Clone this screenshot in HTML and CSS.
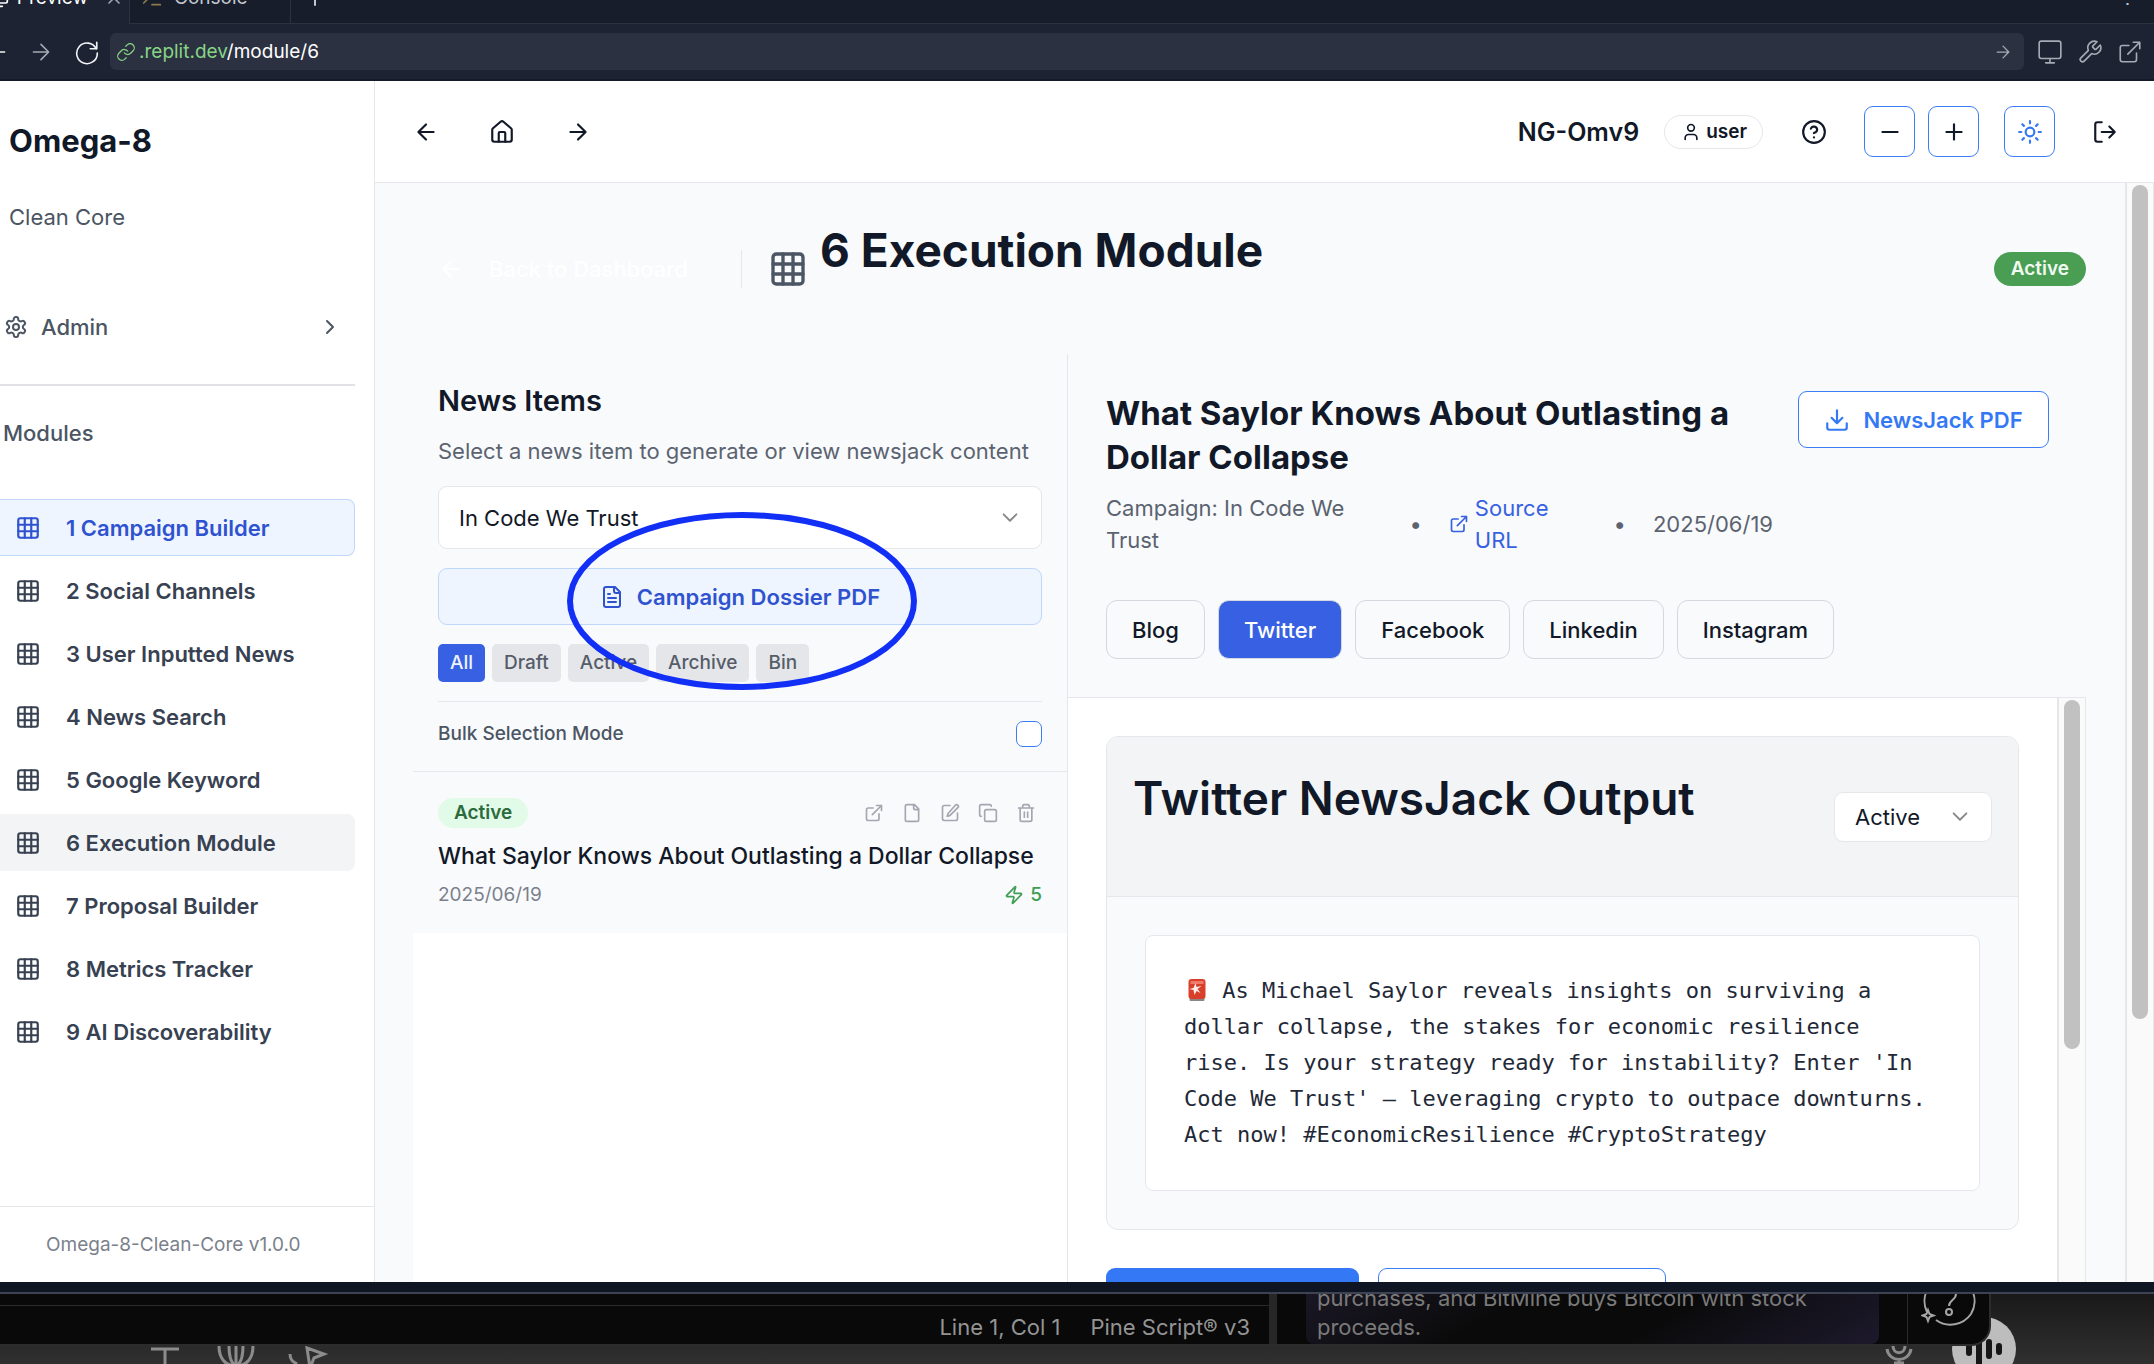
FILE: index.html
```html
<!DOCTYPE html>
<html lang="en">
<head>
<meta charset="utf-8">
<title>Omega-8 – 6 Execution Module</title>
<link rel="stylesheet" href="styles.css">
</head>
<body>
<svg class="sprite" aria-hidden="true">
  <symbol id="grid" viewBox="0 0 24 24"><rect x="3" y="3" width="18" height="18" rx="2"/><path d="M3 9h18M3 15h18M9 3v18M15 3v18"/></symbol>
  <symbol id="left" viewBox="0 0 24 24"><path d="m12 19-7-7 7-7M19 12H5"/></symbol>
  <symbol id="right" viewBox="0 0 24 24"><path d="m12 5 7 7-7 7M5 12h14"/></symbol>
  <symbol id="home" viewBox="0 0 24 24"><path d="M15 21v-8a1 1 0 0 0-1-1h-4a1 1 0 0 0-1 1v8"/><path d="M3 10a2 2 0 0 1 .7-1.5l7-6a2 2 0 0 1 2.6 0l7 6A2 2 0 0 1 21 10v9a2 2 0 0 1-2 2H5a2 2 0 0 1-2-2z"/></symbol>
  <symbol id="reload" viewBox="0 0 24 24"><path d="M21 3v6h-6"/><path d="M20.500 9A9.500 9.500 0 1 0 21.500 13"/></symbol>
  <symbol id="link" viewBox="0 0 24 24"><path d="M10 13a5 5 0 0 0 7.540.540l3-3a5 5 0 0 0-7.070-7.070l-1.720 1.710"/><path d="M14 11a5 5 0 0 0-7.540-.540l-3 3a5 5 0 0 0 7.070 7.070l1.710-1.710"/></symbol>
  <symbol id="monitor" viewBox="0 0 24 24"><rect x="2" y="2" width="20" height="16" rx="2"/><path d="M8 22h8M12 18v4"/></symbol>
  <symbol id="wrench" viewBox="0 0 24 24"><path d="M14.700 6.300a1 1 0 0 0 0 1.400l1.600 1.600a1 1 0 0 0 1.400 0l3.770-3.770a6 6 0 0 1-7.940 7.940l-6.910 6.910a2.120 2.120 0 0 1-3-3l6.910-6.910a6 6 0 0 1 7.940-7.940z"/></symbol>
  <symbol id="external" viewBox="0 0 24 24"><path d="M15 3h6v6M10 14 21 3M18 13v6a2 2 0 0 1-2 2H5a2 2 0 0 1-2-2V8a2 2 0 0 1 2-2h6"/></symbol>
  <symbol id="cog" viewBox="0 0 24 24"><path d="M12.220 2h-.440a2 2 0 0 0-2 2v.180a2 2 0 0 1-1 1.730l-.430.250a2 2 0 0 1-2 0l-.150-.080a2 2 0 0 0-2.730.730l-.220.380a2 2 0 0 0 .730 2.730l.150.100a2 2 0 0 1 1 1.720v.510a2 2 0 0 1-1 1.740l-.150.090a2 2 0 0 0-.730 2.730l.220.380a2 2 0 0 0 2.730.730l.150-.080a2 2 0 0 1 2 0l.430.250a2 2 0 0 1 1 1.730V20a2 2 0 0 0 2 2h.440a2 2 0 0 0 2-2v-.180a2 2 0 0 1 1-1.730l.430-.250a2 2 0 0 1 2 0l.150.080a2 2 0 0 0 2.730-.730l.220-.390a2 2 0 0 0-.730-2.730l-.150-.080a2 2 0 0 1-1-1.740v-.500a2 2 0 0 1 1-1.740l.150-.090a2 2 0 0 0 .730-2.730l-.220-.380a2 2 0 0 0-2.730-.730l-.150.080a2 2 0 0 1-2 0l-.430-.250a2 2 0 0 1-1-1.730V4a2 2 0 0 0-2-2z"/><circle cx="12" cy="12" r="3"/></symbol>
  <symbol id="chev-right" viewBox="0 0 24 24"><path d="m9 18 6-6-6-6"/></symbol>
  <symbol id="chev-down" viewBox="0 0 24 24"><path d="m5 8 7 7 7-7"/></symbol>
  <symbol id="user" viewBox="0 0 24 24"><path d="M19 21v-2a4 4 0 0 0-4-4H9a4 4 0 0 0-4 4v2"/><circle cx="12" cy="7" r="4"/></symbol>
  <symbol id="help" viewBox="0 0 24 24"><circle cx="12" cy="12" r="10"/><path d="M9.090 9a3 3 0 0 1 5.830 1c0 2-3 3-3 3M12 17h.010"/></symbol>
  <symbol id="minus" viewBox="0 0 24 24"><path d="M5 12h14"/></symbol>
  <symbol id="plus" viewBox="0 0 24 24"><path d="M5 12h14M12 5v14"/></symbol>
  <symbol id="sun" viewBox="0 0 24 24"><circle cx="12" cy="12" r="4"/><path d="M12 2v2M12 20v2M4.930 4.930l1.410 1.410M17.660 17.660l1.410 1.410M2 12h2M20 12h2M6.340 17.660l-1.410 1.410M19.070 4.930l-1.410 1.410"/></symbol>
  <symbol id="logout" viewBox="0 0 24 24"><path d="M9 21H5a2 2 0 0 1-2-2V5a2 2 0 0 1 2-2h4M16 17l5-5-5-5M21 12H9"/></symbol>
  <symbol id="filetext" viewBox="0 0 24 24"><path d="M15 2H6a2 2 0 0 0-2 2v16a2 2 0 0 0 2 2h12a2 2 0 0 0 2-2V7zM14 2v4a2 2 0 0 0 2 2h4M10 9H8M16 13H8M16 17H8"/></symbol>
  <symbol id="file" viewBox="0 0 24 24"><path d="M15 2H6a2 2 0 0 0-2 2v16a2 2 0 0 0 2 2h12a2 2 0 0 0 2-2V7zM14 2v4a2 2 0 0 0 2 2h4"/></symbol>
  <symbol id="edit" viewBox="0 0 24 24"><path d="M12 3H5a2 2 0 0 0-2 2v14a2 2 0 0 0 2 2h14a2 2 0 0 0 2-2v-7"/><path d="M18.380 2.620a1 1 0 0 1 3 3l-9 9a2 2 0 0 1-.860.510l-2.870.840.840-2.870a2 2 0 0 1 .510-.860z"/></symbol>
  <symbol id="copy" viewBox="0 0 24 24"><rect x="8" y="8" width="14" height="14" rx="2"/><path d="M4 16a2 2 0 0 1-2-2V4a2 2 0 0 1 2-2h10a2 2 0 0 1 2 2"/></symbol>
  <symbol id="trash" viewBox="0 0 24 24"><path d="M3 6h18M19 6v14a2 2 0 0 1-2 2H7a2 2 0 0 1-2-2V6M8 6V4a2 2 0 0 1 2-2h4a2 2 0 0 1 2 2v2M10 11v6M14 11v6"/></symbol>
  <symbol id="zap" viewBox="0 0 24 24"><path d="M4 14a1 1 0 0 1-.780-1.630l9.900-10.200a.5.5 0 0 1 .860.460l-1.920 6.020A1 1 0 0 0 13 10h7a1 1 0 0 1 .780 1.630l-9.900 10.200a.5.5 0 0 1-.860-.460l1.920-6.020A1 1 0 0 0 11 14z"/></symbol>
  <symbol id="download" viewBox="0 0 24 24"><path d="M21 15v4a2 2 0 0 1-2 2H5a2 2 0 0 1-2-2v-4M7 10l5 5 5-5M12 15V3"/></symbol>
  <symbol id="close" viewBox="0 0 24 24"><path d="M18 6 6 18M6 6l12 12"/></symbol>
</svg>

<div class="browser">
  <div class="tabs">
    <button class="tab tab-on"><svg class="icon s20"><use href="#monitor"/></svg>Preview<svg class="icon s20 tab-x"><use href="#close"/></svg></button>
    <button class="tab"><svg class="icon s20 prompt" viewBox="0 0 24 24"><path d="m2 18 6-6-6-6M12 20h10"/></svg>Console</button>
    <button class="tab tab-new" aria-label="New tab"><svg class="icon s24"><use href="#plus"/></svg></button>
    <span class="more">⋮</span>
  </div>
  <div class="toolbar">
    <button class="tool first" aria-label="Back"><svg class="icon s26"><use href="#left"/></svg></button>
    <button class="tool dim" aria-label="Forward"><svg class="icon s26"><use href="#right"/></svg></button>
    <button class="tool reload" aria-label="Reload"><svg class="icon s26"><use href="#reload"/></svg></button>
    <div class="address">
      <svg class="icon s20 green"><use href="#link"/></svg>
      <span class="url"><span class="green">.replit.dev</span>/module/6</span>
      <svg class="icon s20 go"><use href="#right"/></svg>
    </div>
    <button class="tool dim" aria-label="Devices"><svg class="icon s26"><use href="#monitor"/></svg></button>
    <button class="tool dim" aria-label="Tools"><svg class="icon s26"><use href="#wrench"/></svg></button>
    <button class="tool dim" aria-label="Open in new tab"><svg class="icon s26"><use href="#external"/></svg></button>
  </div>
</div>

<div class="app">
  <aside class="sidebar">
    <div class="brand">Omega-8</div>
    <div class="tagline">Clean Core</div>
    <button class="admin"><svg class="icon s24"><use href="#cog"/></svg><span>Admin</span><svg class="icon s24"><use href="#chev-right"/></svg></button>
    <hr class="rule">
    <div class="group">Modules</div>
    <nav class="nav">
      <a class="navitem selected" href="#1"><svg class="icon s26"><use href="#grid"/></svg>1 Campaign Builder</a>
      <a class="navitem" href="#2"><svg class="icon s26"><use href="#grid"/></svg>2 Social Channels</a>
      <a class="navitem" href="#3"><svg class="icon s26"><use href="#grid"/></svg>3 User Inputted News</a>
      <a class="navitem" href="#4"><svg class="icon s26"><use href="#grid"/></svg>4 News Search</a>
      <a class="navitem" href="#5"><svg class="icon s26"><use href="#grid"/></svg>5 Google Keyword</a>
      <a class="navitem current" href="#6"><svg class="icon s26"><use href="#grid"/></svg>6 Execution Module</a>
      <a class="navitem" href="#7"><svg class="icon s26"><use href="#grid"/></svg>7 Proposal Builder</a>
      <a class="navitem" href="#8"><svg class="icon s26"><use href="#grid"/></svg>8 Metrics Tracker</a>
      <a class="navitem" href="#9"><svg class="icon s26"><use href="#grid"/></svg>9 AI Discoverability</a>
    </nav>
    <div class="version">Omega-8-Clean-Core v1.0.0</div>
  </aside>

  <div class="main">
    <header class="topbar">
      <button class="ghost" aria-label="Back"><svg class="icon s26"><use href="#left"/></svg></button>
      <button class="ghost" aria-label="Home"><svg class="icon s26"><use href="#home"/></svg></button>
      <button class="ghost" aria-label="Forward"><svg class="icon s26"><use href="#right"/></svg></button>
      <span class="account">NG-Omv9</span>
      <span class="userpill"><svg class="icon s20"><use href="#user"/></svg>user</span>
      <button class="ghost help" aria-label="Help"><svg class="icon s26"><use href="#help"/></svg></button>
      <button class="square" aria-label="Smaller text"><svg class="icon s26"><use href="#minus"/></svg></button>
      <button class="square" aria-label="Larger text"><svg class="icon s26"><use href="#plus"/></svg></button>
      <button class="square theme" aria-label="Theme"><svg class="icon s26"><use href="#sun"/></svg></button>
      <button class="ghost logout" aria-label="Log out"><svg class="icon s26"><use href="#logout"/></svg></button>
    </header>

    <div class="body">
      <div class="content">
        <div class="pagehead">
          <a class="back" href="#dashboard"><svg class="icon s26"><use href="#left"/></svg>Back to Dashboard</a>
          <span class="vline"></span>
          <svg class="icon s38 titleicon"><use href="#grid"/></svg>
          <h1>6 Execution Module</h1>
          <span class="status">Active</span>
        </div>

        <div class="columns">
          <section class="news">
            <div class="newshead">
              <h2 class="sub">News Items</h2>
              <p class="desc">Select a news item to generate or view newsjack content</p>
              <div class="field">
                <select class="select campaign-select" aria-label="Campaign"><option>In Code We Trust</option></select>
                <svg class="icon s22 chev"><use href="#chev-down"/></svg>
              </div>
              <button class="dossier"><svg class="icon s24"><use href="#filetext"/></svg>Campaign Dossier PDF</button>
              <div class="chips">
                <button class="chip chip-on">All</button><button class="chip">Draft</button><button class="chip">Active</button><button class="chip">Archive</button><button class="chip">Bin</button>
              </div>
              <div class="bulk"><label for="bulk">Bulk Selection Mode</label><input type="checkbox" id="bulk"></div>
              <svg class="ring" viewBox="0 0 350 180" aria-hidden="true"><ellipse cx="175" cy="90" rx="172" ry="86"/></svg>
            </div>
            <article class="item">
              <div class="itemtop">
                <span class="pill">Active</span>
                <span class="actions">
                  <button aria-label="Open"><svg class="icon s20"><use href="#external"/></svg></button>
                  <button aria-label="File"><svg class="icon s20"><use href="#file"/></svg></button>
                  <button aria-label="Edit"><svg class="icon s20"><use href="#edit"/></svg></button>
                  <button aria-label="Copy"><svg class="icon s20"><use href="#copy"/></svg></button>
                  <button aria-label="Delete"><svg class="icon s20"><use href="#trash"/></svg></button>
                </span>
              </div>
              <h3>What Saylor Knows About Outlasting a Dollar Collapse</h3>
              <div class="itemfoot"><span>2025/06/19</span><span class="count"><svg class="icon s20"><use href="#zap"/></svg>5</span></div>
            </article>
          </section>

          <section class="detail">
            <div class="detailhead">
              <div class="headrow">
                <div class="headtext">
                  <h2 class="headline">What Saylor Knows About Outlasting a Dollar Collapse</h2>
                  <div class="meta">
                    <span class="camp">Campaign: In Code We Trust</span><span>•</span>
                    <a class="source" href="#source"><svg class="icon s18"><use href="#external"/></svg><span>Source<br>URL</span></a><span>•</span>
                    <span>2025/06/19</span>
                  </div>
                </div>
                <button class="pdf"><svg class="icon s26"><use href="#download"/></svg>NewsJack PDF</button>
              </div>
              <div class="channels">
                <button class="channel">Blog</button>
                <button class="channel channel-on">Twitter</button>
                <button class="channel">Facebook</button>
                <button class="channel">Linkedin</button>
                <button class="channel">Instagram</button>
              </div>
            </div>
            <div class="output">
              <div class="outputbody">
                <div class="card">
                  <div class="cardhead">
                    <h2 class="cardtitle">Twitter NewsJack Output</h2>
                    <div class="field statusfield">
                      <select class="select" aria-label="Status"><option>Active</option></select>
                      <svg class="icon s22 chev"><use href="#chev-down"/></svg>
                    </div>
                  </div>
                  <div class="cardbody">
                    <p class="tweet"><svg class="siren" viewBox="0 0 24 24" aria-label="siren"><rect x="5" y="20" width="15" height="3" rx="1" fill="#8b8583"/><rect x="4" y="1" width="17" height="20" rx="3" fill="#d8402c"/><path d="M6 3h13v3H6z" fill="#ef7a67"/><path d="m11 5 1 4 5-1-4 3 3 4-4-2-2 4-1-5-4-1 4-1z" fill="#fff0ec"/></svg> As Michael Saylor reveals insights on surviving a dollar collapse, the stakes for economic resilience rise. Is your strategy ready for instability? Enter 'In Code We Trust' – leveraging crypto to outpace downturns. Act now! #EconomicResilience #CryptoStrategy</p>
                  </div>
                </div>
                <div class="footbuttons"><button class="solid" aria-label="Generate"></button><button class="outline" aria-label="Regenerate"></button></div>
              </div>
              <div class="scroll"><div class="thumb thumb-inner"></div></div>
            </div>
          </section>
        </div>
      </div>
      <div class="scroll"><div class="thumb thumb-outer"></div></div>
    </div>
  </div>
</div>
<div class="edge"></div>

<div class="desktop">
  <div class="editor">
    <div class="statusbar"><span>Line 1, Col 1</span><span>Pine Script® v3</span></div>
    <div class="split"></div>
    <div class="feed"><p>purchases, and BitMine buys Bitcoin with stock proceeds.</p></div>
    <div class="assist"><svg class="helpmark" viewBox="0 0 56 56"><path d="M6 38A25 25 0 1 1 50 40 25 25 0 0 1 15 46"/><path d="M22 20c0-9 13-9 13 0 0 6-7 6-7 12"/><circle cx="28" cy="38" r="3"/><path d="m7 36 1.500 4 4 1.500-4 1.500-1.500 4-1.500-4-4-1.500 4-1.500z"/></svg></div>
  </div>
  <div class="dock">
    <svg class="dockicons" viewBox="0 0 180 19"><path d="M2 3h28M16 3v16M70 0c0 12 6 20 17 20s17-8 17-20M80 0c0 12 3 18 7 20M94 0c0 12-3 18-7 20M87 0v20M141 8c0 7 4 8 7 10M158 2l17 6-10 4-4 10z"/></svg>
    <svg class="mic" viewBox="0 0 28 19"><path d="M2 3c2 14 22 14 24 0M8 0c0 9 12 9 12 0M14 14v5M9 17h10"/></svg>
  </div>
  <div class="voice"><svg viewBox="0 0 64 64"><path d="M17 27v9M27 18v29M37 25v14M47 29v6"/></svg></div>
</div>
</body>
</html>
```

FILE: styles.css
```css
* { box-sizing: border-box; }
body {
  margin: 0; height: 100vh; overflow: hidden;
  display: flex; flex-direction: column;
  font: 22px/32px Inter, "Liberation Sans", sans-serif;
  color: #111827; background: #0f1523;
}
button, select, input { font: inherit; color: inherit; margin: 0; }
button { border: 0; background: none; padding: 0; display: flex; align-items: center; justify-content: center; }
h1, h2, h3, p { margin: 0; }
a { color: inherit; text-decoration: none; }
.sprite { display: none; }
.icon { fill: none; stroke: currentColor; stroke-width: 2; stroke-linecap: round; stroke-linejoin: round; flex: none; display: block; }
.s18 { width: 20px; height: 20px; }
.s20 { width: 20px; height: 20px; }
.s22 { width: 22px; height: 22px; }
.s24 { width: 24px; height: 24px; }
.s26 { width: 26px; height: 26px; }
.s38 { width: 40px; height: 40px; }

/* browser chrome */
.browser { flex: none; background: #1d2332; border-bottom: 2px solid #151a28; font-size: 19px; }
.browser .icon { stroke-width: 1.5; }
.tabs { height: 24px; display: flex; align-items: flex-end; overflow: hidden; background: #171d2b; }
.tab { height: 52px; gap: 12px; padding: 0 12px; color: #c3c7cf; border-right: 1px solid #2c3242; border-bottom: 1px solid #2c3242; width: 161px; justify-content: flex-start; }
.tabs .icon { stroke-width: 2; }
.tab-on { background: #1d2332; color: #fff; width: 130px; padding: 0 5px 0 0; gap: 8px; justify-content: flex-end; border-bottom: 0; }
.tab-x { margin-left: 8px; color: #9ca1ac; }
.prompt { color: #8a7a4a; }
.tab-new { flex: 1; border-right: 0; }
.more { height: 52px; width: 36px; line-height: 52px; border-bottom: 1px solid #2c3242; color: #c3c7cf; }
.toolbar { display: flex; align-items: center; height: 55px; padding-right: 11px; gap: 14px; }
.tool { color: #f3f4f6; }
.tool.first { margin-left: -16px; }
.dim { color: #a6abb5; }
.tool.first + .tool { margin-left: 4px; }
.reload { margin-left: 6px; margin-right: -6px; }
.address { flex: 1; height: 37px; border-radius: 6px; background: #2c3141; display: flex; align-items: center; gap: 3px; padding: 0 11px 0 6px; margin-left: 2px; margin-right: -1px; color: #fff; }
.green { color: #86d585; }
.go { margin-left: auto; color: #a6abb5; }

/* application frame */
.app { flex: 1; min-height: 0; display: flex; background: #fff; }
.sidebar { width: 375px; flex: none; border-right: 1px solid #e5e7eb; padding-top: 38px; display: flex; flex-direction: column; color: #4b5563; }
.brand { font-size: 31px; line-height: 44px; font-weight: 700; color: #111827; padding-left: 9px; }
.tagline { margin-top: 38px; padding-left: 9px; }
.admin { margin: 66px 18px 0 4px; height: 56px; gap: 13px; font-weight: 500; justify-content: flex-start; }
.admin span { flex: 1; text-align: left; }
.admin .icon:last-child { margin-right: 14px; }
.rule { width: calc(100% - 19px); margin: 29px 0 0; border: 0; height: 2px; background: #e0e2e5; }
.group { margin-top: 31px; padding-left: 3px; font-weight: 500; }
.nav { margin-top: 50px; margin-right: 19px; display: flex; flex-direction: column; gap: 6px; }
.navitem { height: 57px; display: flex; align-items: center; gap: 25px; padding-left: 15px; font-weight: 600; color: #374151; border: 1px solid transparent; border-left: 0; border-radius: 0 8px 8px 0; }
.selected { background: #eef5fe; border-color: #bfd7fb; color: #2f53d0; }
.current { background: #f3f4f6; }
.version { margin-top: auto; height: 76px; border-top: 1px solid #e5e7eb; display: flex; align-items: center; padding-left: 46px; font-size: 19px; color: #7b818c; }
.main { flex: 1; min-width: 0; display: flex; flex-direction: column; }
.topbar { height: 102px; flex: none; border-bottom: 1px solid #e5e7eb; display: flex; align-items: center; padding: 0 36px 0 38px; }
.ghost { width: 26px; margin-right: 50px; }
.account { margin-left: auto; margin-right: 25px; font-size: 25px; font-weight: 600; }
.userpill { height: 34px; border: 1px solid #e5e7eb; border-radius: 17px; padding: 0 15px 0 16px; display: flex; align-items: center; gap: 5px; font-size: 19px; font-weight: 600; }
.help { margin: 0 37px 0 38px; }
.square { width: 51px; height: 51px; border: 1px solid #3b7df5; border-radius: 9px; margin-right: 13px; }
.theme { margin-left: 12px; margin-right: 37px; color: #3478f6; }
.logout { margin-right: 0; }
.body { flex: 1; min-height: 0; display: flex; background: #f9fafc; }
.scroll { width: 29px; flex: none; background: #fafafa; border-left: 2px solid #e6e7e9; border-right: 1px solid #e6e7e9; padding: 2px 5px 0 5px; }
.thumb { border-radius: 8px; background: #c1c1c1; }
.thumb-outer { height: 76%; }
.thumb-inner { height: 60%; }
.content { flex: 1; min-width: 0; padding: 0 39px 0 38px; display: flex; flex-direction: column; }

/* page heading */
.pagehead { height: 171px; flex: none; display: flex; align-items: center; }
.back { margin-left: 25px; display: flex; gap: 25px; align-items: center; font-weight: 500; color: #fff; }
.vline { width: 1px; height: 38px; background: #e5e7eb; margin: 0 26px 0 53px; }
.titleicon { color: #4b5563; }
h1 { margin: 0 0 38px 12px; font-size: 46px; line-height: 58px; font-weight: 700; }
.status { margin-left: auto; height: 34px; border-radius: 17px; background: #4a9e54; color: #f0faf1; padding: 0 17px; font-size: 19px; line-height: 34px; font-weight: 600; }

/* news list */
.columns { flex: 1; min-height: 0; display: grid; grid-template-columns: 655fr 1018fr; grid-template-rows: minmax(0, 1fr); }
.news { border-right: 1px solid #e5e7eb; background: #fff; }
.newshead { position: relative; background: #f9fafc; padding: 27px 25px 0; border-bottom: 1px solid #e5e7eb; }
.sub { font-size: 29px; line-height: 40px; font-weight: 600; }
.desc { margin-top: 14px; color: #5b6370; white-space: nowrap; }
.field { position: relative; display: flex; align-items: center; }
.select { appearance: none; width: 100%; height: 100%; border: 1px solid #e5e7eb; border-radius: 9px; background: #fff; padding: 0 20px; }
.campaign-select { height: 63px; }
.newshead .field { margin-top: 19px; }
.chev { position: absolute; right: 21px; color: #888; pointer-events: none; }
.dossier { width: 100%; height: 57px; margin-top: 19px; gap: 13px; border: 1px solid #bfd7fb; border-radius: 9px; background: #eef5fe; color: #2f53d0; font-weight: 600; }
.chips { margin-top: 19px; display: flex; gap: 7px; padding-bottom: 19px; border-bottom: 1px solid #e5e7eb; }
.chip { height: 38px; padding: 0 12px; border-radius: 5px; background: #e5e6ea; color: #565d69; font-size: 19px; font-weight: 500; }
.chip-on { background: #3761e2; color: #eef2ff; }
.bulk { display: flex; justify-content: space-between; align-items: center; padding: 19px 0 24px; height: 69px; font-size: 19px; font-weight: 500; color: #4b5563; }
.bulk input { appearance: none; width: 26px; height: 26px; border: 1px solid #3b7df5; border-radius: 7px; background: #fff; }
.ring { position: absolute; left: 154px; top: 157px; width: 350px; height: 180px; fill: none; stroke: #1230f5; stroke-width: 6; pointer-events: none; }
.item { background: #f9fafc; padding: 26px 25px 24px; }
.itemtop, .itemfoot { display: flex; justify-content: space-between; align-items: center; }
.pill { height: 30px; padding: 0 16px; border-radius: 15px; background: #e2fae8; color: #2c6b3c; font-size: 19px; line-height: 30px; font-weight: 600; }
.actions { display: flex; gap: 18px; margin-right: 6px; color: #a3a7b0; }
.item h3 { margin-top: 12px; font-size: 23px; line-height: 32px; font-weight: 500; white-space: nowrap; }
.itemfoot { margin-top: 9px; font-size: 19px; line-height: 28px; color: #7b818c; }
.count { display: flex; align-items: center; gap: 6px; color: #3f9e54; font-weight: 500; }

/* detail */
.detail { min-width: 0; display: flex; flex-direction: column; }
.detailhead { padding: 37px 37px 38px 38px; border-bottom: 1px solid #e5e7eb; }
.headrow { display: flex; justify-content: space-between; align-items: flex-start; gap: 25px; }
.headtext { flex: 1; min-width: 0; }
.headline { font-size: 33px; line-height: 44px; font-weight: 700; }
.meta { margin-top: 13px; display: flex; align-items: center; gap: 27px; color: #5b6370; }
.camp { flex: 0 1 281px; }
.source { width: 140px; display: flex; align-items: center; gap: 6px; color: #3761e2; }
.pdf { flex: none; width: 251px; height: 57px; gap: 13px; border: 1px solid #3b7df5; border-radius: 9px; background: #fff; color: #3478f6; font-weight: 600; }
.channels { margin-top: 44px; display: flex; gap: 13px; }
.channel { height: 59px; padding: 0 25px; border: 1px solid #d5d8de; border-radius: 11px; font-weight: 500; }
.channel-on { background: #3761e2; color: #fff; }
.output { flex: 1; min-height: 0; display: flex; background: #fff; }
.outputbody { flex: 1; min-width: 0; overflow: hidden; padding: 38px 38px 0; }
.card { border: 1px solid #e5e7eb; border-radius: 12px; background: #f9fafc; overflow: hidden; }
.cardhead { height: 160px; background: #f3f4f6; border-bottom: 1px solid #e5e7eb; display: flex; align-items: center; justify-content: space-between; padding: 0 26px; }
.cardtitle { font-size: 46px; line-height: 52px; font-weight: 600; margin-bottom: 38px; white-space: nowrap; }
.statusfield { width: 158px; height: 50px; }
.cardbody { padding: 38px; }
.tweet { margin: 0; border: 1px solid #e5e7eb; border-radius: 8px; background: #fff; padding: 37px 48px 37px 38px; font: 22px/36px "DejaVu Sans Mono", monospace; color: #1f2937; }
.siren { width: 25px; height: 24px; vertical-align: -4px; }
.footbuttons { margin-top: 38px; display: flex; gap: 19px; }
.solid { width: 253px; height: 57px; border-radius: 9px; background: #3478f6; }
.outline { width: 288px; height: 57px; border-radius: 9px; border: 1px solid #3b7df5; }
.edge { flex: none; height: 12px; background: #0f1523; border-bottom: 2px solid #3d4352; }

/* windows behind the preview */
.desktop { position: relative; flex: none; height: 70px; background: linear-gradient(#191919, #303030); overflow: hidden; }
.editor { position: relative; z-index: 1; width: 1991px; height: 52px; background: #090909; border-bottom: 2px solid #2c2c2c; border-right: 2px solid #2c2c2c; border-radius: 0 0 20px 0; display: flex; color: #949494; overflow: hidden; }
.statusbar { flex: none; width: 1269px; margin-top: 11px; border-top: 1px solid #2a2a2a; display: flex; justify-content: flex-end; gap: 30px; padding: 5px 19px 0 0; }
.split { width: 8px; background: #272727; margin-right: 29px; }
.feed { width: 574px; overflow: hidden; border-radius: 0 0 8px 8px; background: linear-gradient(150deg, #1a1724 0, #0a0a0a 35%, #0a0a0a 60%, #1d192c 100%); color: #7a7a7a; }
.feed p { margin: -10px 0 0 11px; width: 500px; line-height: 29px; }
.assist { margin-left: 28px; width: 82px; border-left: 1px solid #2a2a2a; }
.helpmark { display: block; width: 56px; height: 56px; margin: -20px auto 0; fill: none; stroke: #a5a5a5; stroke-width: 2; }
.dock { height: 18px; display: flex; justify-content: space-between; padding: 0 241px 0 149px; fill: none; stroke: #8c8c8c; stroke-width: 3; }
.dockicons { width: 180px; height: 19px; }
.mic { width: 28px; height: 19px; }
.voice { position: absolute; right: 138px; top: 23px; width: 64px; height: 64px; border-radius: 50%; background: #bdbdbd; }
.voice svg { display: block; fill: none; stroke: #161616; stroke-width: 6; stroke-linecap: round; }
```
